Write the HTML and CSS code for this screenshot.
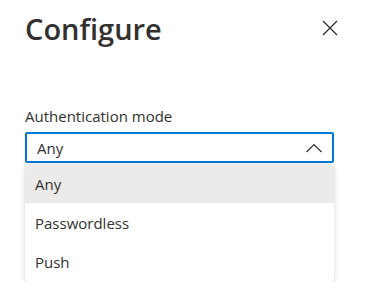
FILE: index.html
```html
<!DOCTYPE html>
<html lang="en">
<head>
  <meta charset="UTF-8">
  <title>Configure</title>
  <link rel="stylesheet" href="styles.css">
</head>
<body>
  <div class="panel">
    <!-- Header -->
    <header class="panel-header">
      <h1>Configure</h1>
      <button class="close" aria-label="Close">
        <svg width="16" height="16" viewBox="0 0 16 16"><path d="M1 1L15 15M15 1L1 15" stroke="#323130" stroke-width="1.3" fill="none"/></svg>
      </button>
    </header>

    <!-- Field -->
    <div class="field">
      <label>Authentication mode</label>
      <div class="dropdown">
        <span>Any</span>
        <svg class="chevron" width="16" height="10" viewBox="0 0 16 10"><path d="M0.5 9L8 1.5L15.5 9" stroke="#323130" stroke-width="1.2" fill="none"/></svg>
      </div>
      <ul class="options">
        <li class="selected">Any</li>
        <li>Passwordless</li>
        <li>Push</li>
      </ul>
    </div>
  </div>
</body>
</html>
```

FILE: styles.css
```css
* {
  margin: 0;
  padding: 0;
  box-sizing: border-box;
}

body {
  font-family: 'Open Sans', 'Noto Sans', sans-serif;
  color: #323130;
  background: #fff;
}

.panel {
  width: 359px;
  padding: 0 25px;
}

/* Header */
.panel-header {
  display: flex;
  justify-content: space-between;
  align-items: center;
  height: 56px;
}

.panel-header h1 {
  font-size: 29px;
  font-weight: 600;
}

.close {
  background: none;
  border: 0;
  width: 32px;
  height: 32px;
  display: flex;
  align-items: center;
  justify-content: center;
  margin-right: -12px;
}

/* Field */
.field {
  margin-top: 50px;
}

.field label {
  display: block;
  font-size: 15px;
  line-height: 20px;
  margin-bottom: 6px;
}

.dropdown {
  display: flex;
  justify-content: space-between;
  align-items: center;
  height: 31px;
  border: 2px solid #0078d4;
  border-radius: 2px;
  padding: 0 10px;
  font-size: 15px;
}

.options {
  list-style: none;
  margin-top: 1px;
  background: #fff;
  border-radius: 2px;
  box-shadow: 0 3px 7px rgba(0,0,0,0.13), 0 0.6px 2px rgba(0,0,0,0.1);
}

.options li {
  height: 39px;
  display: flex;
  align-items: center;
  padding: 0 10px;
  font-size: 15px;
}

.options li.selected {
  background: #edebe9;
}
```
